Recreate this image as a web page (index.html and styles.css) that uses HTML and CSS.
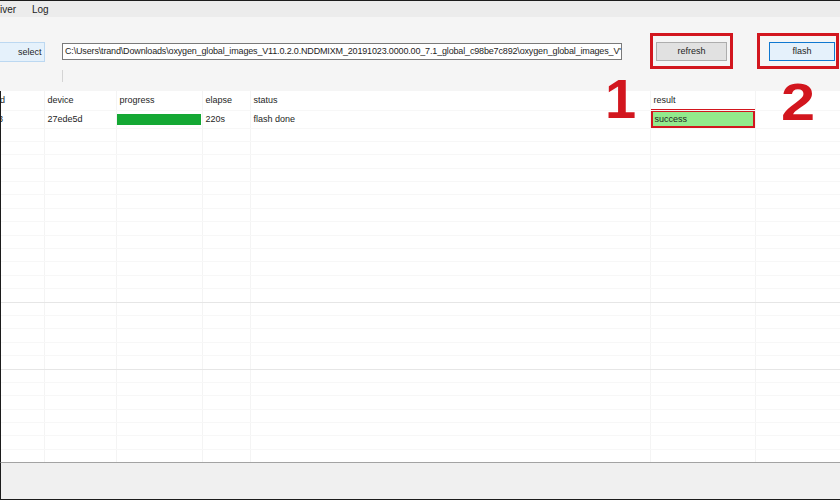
FILE: index.html
```html
<!DOCTYPE html>
<html lang="en">
<head>
    <meta charset="UTF-8">
    <meta name="viewport" content="width=device-width, initial-scale=1.0">
    <title>Flash tool</title>
    <link rel="stylesheet" href="styles.css">
</head>
<body>
    <div class="window">
        <div class="menubar">
            <span class="menu-item">iver</span>
            <span class="menu-item">Log</span>
        </div>

        <div class="toolbar">
            <div class="toolbar-row">
                <button type="button" class="btn btn-select">select</button>
                <div class="path-box">C:\Users\trand\Downloads\oxygen_global_images_V11.0.2.0.NDDMIXM_20191023.0000.00_7.1_global_c98be7c892\oxygen_global_images_V'</div>
                <div class="mark mark-refresh"><button type="button" class="btn btn-refresh">refresh</button></div>
                <div class="mark mark-flash"><button type="button" class="btn btn-flash">flash</button></div>
            </div>
            <div class="toolbar-sep"></div>
        </div>

        <div class="grid">
            <table class="device-table">
                <colgroup>
                    <col class="c-id"><col class="c-device"><col class="c-progress"><col class="c-elapse">
                    <col class="c-status"><col class="c-result"><col class="c-extra">
                </colgroup>
                <thead>
                    <tr>
                        <th>id</th><th>device</th><th>progress</th><th>elapse</th><th>status</th><th>result</th><th></th>
                    </tr>
                </thead>
                <tbody>
                    <tr class="row-device">
                        <td>3</td>
                        <td>27ede5d</td>
                        <td class="cell-progress"><div class="progress-fill"></div></td>
                        <td>220s</td>
                        <td>flash done</td>
                        <td class="cell-result"><div class="result-ok">success</div></td>
                        <td></td>
                    </tr>
                </tbody>
            </table>
        </div>

        <div class="statusbar"></div>

        <span class="step step-1">1</span>
        <span class="step step-2">2</span>
    </div>

    <script>
        // empty rows to fill the grid
        const tbody = document.querySelector('.device-table tbody');
        for (let i = 0; i < 25; i++) {
            const tr = tbody.insertRow();
            tr.className = 'filler';
            if (i === 12 || i === 17) tr.classList.add('split');
            for (let j = 0; j < 7; j++) tr.insertCell();
        }
    </script>
</body>
</html>
```

FILE: styles.css
```css
* { box-sizing: border-box; }
body { margin: 0; font-family: "Liberation Sans", Arial, sans-serif; color: #1e1e1e; background: #f4f4f4; }

.window { position: relative; width: 840px; height: 500px; display: flex; flex-direction: column; border-top: 1px solid #1c1c1c; border-bottom: 1px solid #1c1c1c; overflow: hidden; }

.menubar { height: 16px; background: #ececec; font-size: 10px; line-height: 17px; white-space: nowrap; }
.menu-item { display: inline-block; }
.menu-item + .menu-item { margin-left: 13px; }

.toolbar { height: 74px; background: #f5f5f5; }
.toolbar-row { display: flex; align-items: center; height: 36px; margin-top: 16px; }
.toolbar-sep { width: 1px; height: 12px; margin: 1px 0 0 62px; background: #d4d4d4; }

.btn { font-family: inherit; font-size: 9px; color: #1e1e1e; padding: 0; height: 19px; line-height: 17px; }
.btn-select { width: 45px; height: 20px; margin-top: 2px; text-align: left; padding-left: 18px; background: #e5f1fb; border: 1px solid #bcd8f1; border-left: none; }
.btn-refresh { width: 71px; background: #e1e1e1; border: 1px solid #adadad; }
.btn-flash { width: 66px; background: #e5f1fb; border: 1px solid #0f78d0; }

.path-box { width: 560px; height: 17px; margin-left: 17px; padding-left: 2px; background: #fff; border: 1px solid #7a7a7a; font-size: 9px; letter-spacing: -0.16px; line-height: 15px; white-space: nowrap; overflow: hidden; }

.mark { height: 36px; border: 3px solid #d2161e; display: flex; align-items: center; }
.mark-refresh { width: 83px; margin-left: 28px; justify-content: center; }
.mark-flash { width: 82px; margin-left: 24px; justify-content: flex-end; padding-right: 1px; }

.grid { flex: 1; background: #fff; border-left: 1px solid #1c1c1c; overflow: hidden; }
.device-table { border-collapse: collapse; table-layout: fixed; width: 850px; margin-left: -6px; font-size: 9px; }
.c-id { width: 49px; }
.c-device { width: 72px; }
.c-progress { width: 86px; }
.c-elapse { width: 48px; }
.c-status { width: 400px; }
.c-result { width: 105px; }
.c-extra { width: 90px; }

.device-table th, .device-table td { padding: 0 0 0 3px; text-align: left; font-weight: normal; white-space: nowrap; border-right: 1px solid #f4f4f4; border-bottom: 1px solid #f7f7f7; }
.device-table th { height: 19px; }
.row-device td { height: 17px; }
.cell-progress { padding: 0 1px 0 0 !important; }
.progress-fill { height: 11px; background: #14a834; }
.cell-result { padding: 0 !important; }
.result-ok { height: 20px; margin: -2px -1px -1px; border: 3px solid #d2161e; background: #92ea8c; padding-left: 2px; line-height: 14px; }

.filler td { height: 13.4px; }
.filler:first-child td { height: 10px; }
.filler.split td { border-bottom-color: #e6e6e6; }

.statusbar { height: 37px; background: #f0f0f0; border-top: 1px solid #a3a3a3; border-left: 1px solid #1c1c1c; }

.step { position: absolute; font-weight: bold; color: #d2161e; line-height: 1; }
.step-1 { font-size: 56px; left: 605px; top: 70px; }
.step-2 { font-size: 52px; left: 781px; top: 75px; transform: scaleX(1.18); transform-origin: left top; }
```
